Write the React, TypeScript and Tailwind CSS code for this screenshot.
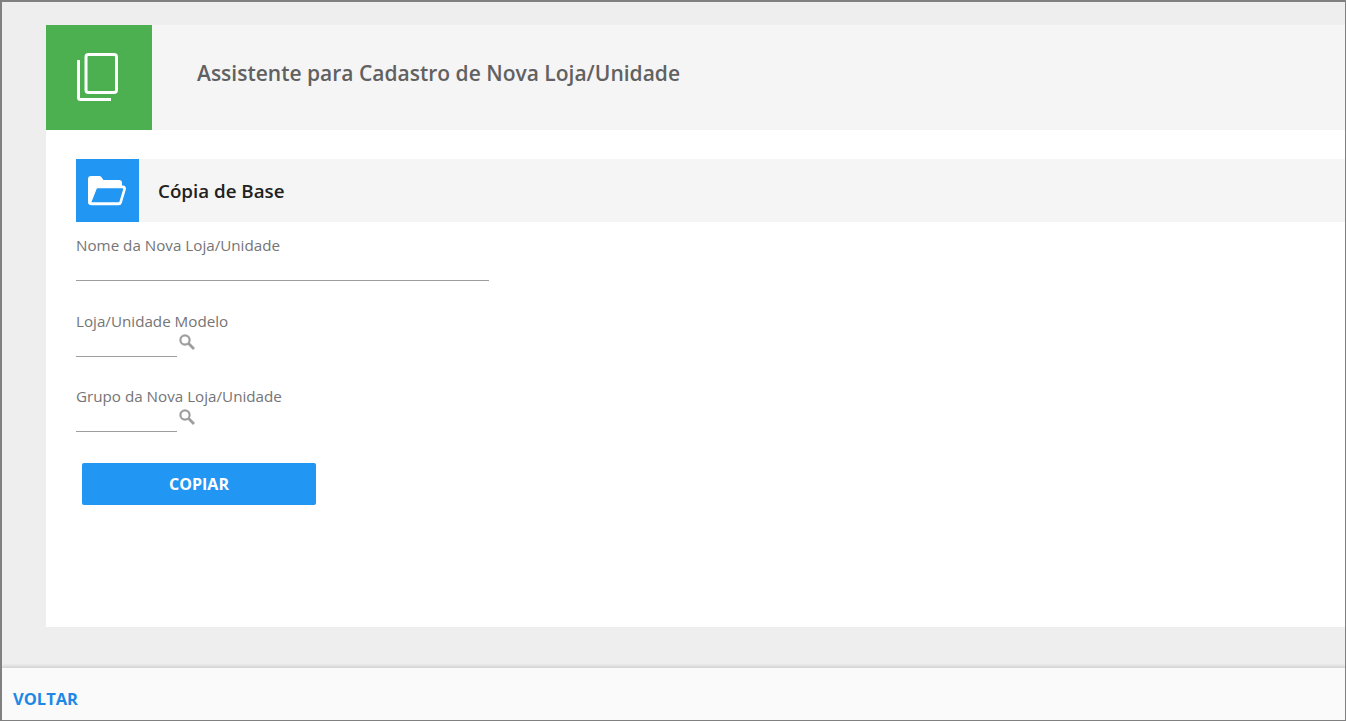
const font = { fontFamily: '"Open Sans", sans-serif' };

function CopyIcon() {
  return (
    <svg width="41" height="48" viewBox="0 0 41 48" fill="none" stroke="#fff" strokeWidth="3" className="-ml-[3px] -mt-[1px]">
      <rect x="9" y="1.5" width="30.5" height="38" rx="2.5" />
      <path d="M1.5 7v37.5a2 2 0 0 0 2 2H34" />
    </svg>
  );
}

function FolderIcon() {
  return (
    <svg width="38" height="30" viewBox="0 0 38 30" fill="#fff" className="-ml-[2px]">
      <path d="M3 0h8.5a2 2 0 0 1 1.6.8L15.5 4H31a3 3 0 0 1 3 3v4H9L3 24v5a3 3 0 0 1-3-3V3a3 3 0 0 1 3-3z" />
      <path
        fillRule="evenodd"
        d="M9.5 9.5H35a3 3 0 0 1 2.8 3.9l-4 13.6a3 3 0 0 1-2.9 2.2H3.5a3 3 0 0 1-2.9-3.8l5.9-13.8a3 3 0 0 1 3-2.1zM9.5 12.3a1 1 0 0 0-.9.6L3.4 26.3h27.2a1 1 0 0 0 .9-.7l3.6-12a1 1 0 0 0-1-1.3z"
      />
    </svg>
  );
}

function SearchIcon() {
  return (
    <svg width="16" height="16" viewBox="0 0 16 16" fill="none" stroke="#9e9e9e" className="ml-[2px] mt-[3px]">
      <circle cx="6" cy="6" r="4.6" strokeWidth="2.2" />
      <path d="M9.6 9.6l5.4 5.4" strokeWidth="2.8" />
    </svg>
  );
}

function SearchField({ label, top }: { label: string; top: string }) {
  return (
    <div className={top}>
      <label className="block text-[15.2px] leading-[19px] text-[#757575]">{label}</label>
      <div className="flex items-start">
        <div className="w-[101px] h-[24px] mt-[1px] box-content border-b border-[#9e9e9e]" />
        <SearchIcon />
      </div>
    </div>
  );
}

export default function App() {
  return (
    <div style={font} className="flex flex-col h-[721px] w-[1346px] overflow-hidden bg-[#eeeeee] border-t-2 border-l-2 border-r border-b border-[#808080]">
      <main className="flex-1 min-h-0 pl-[44px] pt-[23px]">
        {/* Page title */}
        <header className="flex items-center h-[105px] bg-[#f5f5f5]">
          <div className="flex items-center justify-center w-[106px] h-full bg-[#4caf50]">
            <CopyIcon />
          </div>
          <h1 className="ml-[45px] pb-[7px] text-[21px] font-semibold text-[#616161]">
            Assistente para Cadastro de Nova Loja/Unidade
          </h1>
        </header>

        {/* Form card */}
        <section className="h-[497px] bg-white pl-[30px] pt-[29px]">
          <div className="flex items-center h-[63px] bg-[#f5f5f5]">
            <div className="flex items-center justify-center w-[63px] h-full bg-[#2196f3]">
              <FolderIcon />
            </div>
            <h2 className="ml-[19px] pt-[1px] text-[18.75px] font-[550] text-[#212121]">Cópia de Base</h2>
          </div>

          <div className="mt-[14px]">
            <label className="block text-[15.2px] leading-[19px] text-[#757575]">Nome da Nova Loja/Unidade</label>
            <div className="w-[413px] h-[26px] border-b border-[#9e9e9e]" />
          </div>

          <SearchField label="Loja/Unidade Modelo" top="mt-[31px]" />
          <SearchField label="Grupo da Nova Loja/Unidade" top="mt-[30px]" />

          <button className="block ml-[6px] mt-[31px] w-[234px] h-[42px] rounded-[2px] bg-[#2196f3] text-[16px] font-bold text-white">
            COPIAR
          </button>
        </section>
      </main>

      {/* Footer */}
      <footer className="flex items-center h-[53px] pl-[11px] pt-[11px] bg-[#fafafa] border-t border-[#d6d6d6] shadow-[0_-1px_3px_rgba(0,0,0,0.12)]">
        <a className="text-[16.5px] font-bold text-[#1e88e5]">VOLTAR</a>
      </footer>
    </div>
  );
}
